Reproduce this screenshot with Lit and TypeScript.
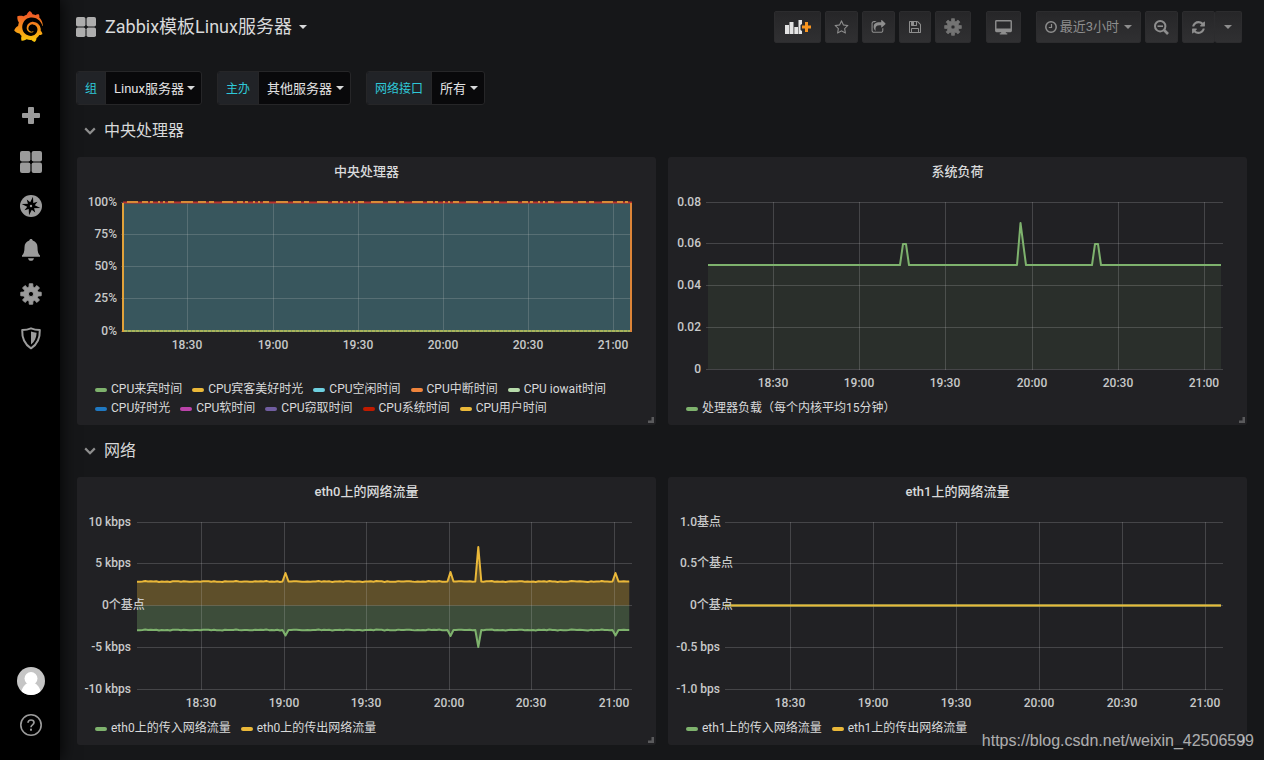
import { LitElement, html, css, svg, nothing } from "lit";
import { customElement, property } from "lit/decorators.js";

type Point = [number, number];

interface Series {
  name: string;
  color: string;
  points?: Point[];
  base?: number;
  fill?: number;
  stroke?: number;
}

interface AxisLabel {
  text: string;
  /** Left edge of the label; labels without one are right-aligned to the plot. */
  x?: number;
}

interface Graph {
  title: string;
  axis: number;
  labelGap: number;
  width: number;
  height: number;
  rows: number[];
  columns: number[];
  labels: AxisLabel[];
  series: Series[];
  frame?: boolean;
}

const TIMES = ["18:30", "19:00", "19:30", "20:00", "20:30", "21:00"];

const GREEN = "#7eb26d";
const YELLOW = "#eab839";

/** A level line with small ripples and the given spikes, all in plot units. */
function traffic(level: number, end: number, spikes: Point[]): Point[] {
  const out: Point[] = [];
  const step = 2.75;
  for (let i = 0; i * step <= end; i++) {
    const x = i * step;
    const ripple = (Math.sin(i * 1.7) + Math.sin(i * 0.61 + 2) + Math.sin(i * 3.3)) / 5;
    if (!spikes.some(([sx]) => Math.abs(sx - x) < 4)) out.push([x, level + ripple]);
  }
  for (const [sx, sy] of spikes) out.push([sx - 3, level], [sx, sy], [sx + 3, level]);
  return out.sort((a, b) => a[0] - b[0]);
}

const GRAPHS: Record<string, Graph> = {
  cpu: {
    title: "中央处理器",
    axis: 44,
    labelGap: 4,
    width: 511,
    height: 130,
    rows: [0, 32, 64, 96, 129],
    columns: [66, 152, 237, 322, 407, 492],
    labels: [{ text: "100%" }, { text: "75%" }, { text: "50%" }, { text: "25%" }, { text: "0%" }],
    frame: true,
    series: [
      { name: "CPU来宾时间", color: GREEN },
      { name: "CPU宾客美好时光", color: YELLOW },
      { name: "CPU空闲时间", color: "#6ed0e0", points: [[2, 1], [510, 1]], base: 129, fill: 0.3, stroke: 0 },
      { name: "CPU中断时间", color: "#ef843c" },
      { name: "CPU iowait时间", color: "#b7dbab" },
      { name: "CPU好时光", color: "#1f78c1" },
      { name: "CPU软时间", color: "#ba43a9" },
      { name: "CPU窃取时间", color: "#705da0" },
      { name: "CPU系统时间", color: "#bf1b00" },
      { name: "CPU用户时间", color: YELLOW },
    ],
  },
  load: {
    title: "系统负荷",
    axis: 38,
    labelGap: 5,
    width: 517,
    height: 168,
    rows: [0, 41, 83, 125, 167],
    columns: [67, 153, 239, 326, 412, 498],
    labels: [{ text: "0.08" }, { text: "0.06" }, { text: "0.04" }, { text: "0.02" }, { text: "0" }],
    series: [
      {
        name: "处理器负载（每个内核平均15分钟）",
        color: GREEN,
        base: 167,
        fill: 0.1,
        points: [
          [2, 63], [194, 63], [197, 42], [200, 42], [203, 63],
          [311, 63], [314.5, 21], [320, 63],
          [386, 63], [389, 42], [392, 42], [395, 63], [515, 63],
        ],
      },
    ],
  },
  eth0: {
    title: "eth0上的网络流量",
    axis: 60,
    labelGap: 6,
    width: 495,
    height: 168,
    rows: [0, 41, 83, 125, 167],
    columns: [64, 147, 229, 312, 394, 477],
    labels: [
      { text: "10 kbps" },
      { text: "5 kbps" },
      { text: "0个基点", x: 25 },
      { text: "-5 kbps" },
      { text: "-10 kbps" },
    ],
    series: [
      {
        name: "eth0上的传入网络流量",
        color: GREEN,
        base: 83.5,
        fill: 0.3,
        points: traffic(108, 493, [[148.5, 113.5], [313.5, 114], [341.3, 125], [478.5, 113.5]]),
      },
      {
        name: "eth0上的传出网络流量",
        color: YELLOW,
        base: 83.5,
        fill: 0.3,
        points: traffic(59.5, 493, [[148.5, 51], [313.5, 50], [341.3, 25], [478.5, 51]]),
      },
    ],
  },
  eth1: {
    title: "eth1上的网络流量",
    axis: 57,
    labelGap: 5,
    width: 498,
    height: 168,
    rows: [0, 41, 83, 125, 167],
    columns: [65, 148, 231, 314, 397, 480],
    labels: [
      { text: "1.0基点", x: 12 },
      { text: "0.5个基点", x: 12 },
      { text: "0个基点", x: 22 },
      { text: "-0.5 bps" },
      { text: "-1.0 bps" },
    ],
    series: [
      { name: "eth1上的传入网络流量", color: GREEN, points: [[0, 83.5], [496, 83.5]] },
      { name: "eth1上的传出网络流量", color: YELLOW, points: [[0, 83.5], [496, 83.5]] },
    ],
  },
};

function gearPath(c: number, outer: number, inner: number, hole: number): string {
  const parts: string[] = [];
  for (let i = 0; i < 8; i++) {
    const a = (i * Math.PI) / 4;
    const corners: Point[] = [[inner, -0.26], [outer, -0.17], [outer, 0.17], [inner, 0.26]];
    for (const [r, d] of corners) {
      parts.push(`${(c + r * Math.sin(a + d)).toFixed(2)} ${(c - r * Math.cos(a + d)).toFixed(2)}`);
    }
  }
  return `M${parts.join("L")}Z M${c - hole} ${c}a${hole} ${hole} 0 1 0 ${hole * 2} 0a${hole} ${hole} 0 1 0 ${-hole * 2} 0Z`;
}

const fa = (size: number, d: string) =>
  html`<svg width=${size} height=${size} viewBox="0 0 1792 1792" aria-hidden="true"><path fill="currentColor" d=${d} /></svg>`;

const gear = (size: number) =>
  html`<svg width=${size} height=${size} viewBox="0 0 24 24" aria-hidden="true">
    <path fill="currentColor" fill-rule="evenodd" stroke="currentColor" stroke-width="1" stroke-linejoin="round" d=${gearPath(12, 11.3, 8, 2.8)} />
  </svg>`;

const caret = html`<svg width="8" height="4" viewBox="0 0 8 4" aria-hidden="true"><path fill="currentColor" d="M0 0h8L4 4z" /></svg>`;

const apps = (size: number) =>
  html`<svg width=${size} height=${size} viewBox="0 0 22 22" aria-hidden="true">
    <g fill="currentColor">
      <rect width="10.4" height="10.4" rx="2" /><rect x="11.6" width="10.4" height="10.4" rx="2" />
      <rect y="11.6" width="10.4" height="10.4" rx="2" /><rect x="11.6" y="11.6" width="10.4" height="10.4" rx="2" />
    </g>
  </svg>`;

const chevron = html`<svg width="12" height="8" viewBox="0 0 12 8" aria-hidden="true">
  <path d="M1.2 1.4L6 6.2l4.800-4.800" fill="none" stroke="currentColor" stroke-width="2.200" />
</svg>`;

const STAR =
  "M1201 1004l306-297-422-62-189-382-189 382-422 62 306 297-73 421 378-199 377 199zm527-357q0 22-26 48l-363 354 86 500q1 7 1 20 0 50-41 50-19 0-40-12l-449-236-449 236q-22 12-40 12-21 0-31.5-14.500t-10.500-35.500q0-6 2-20l86-500-364-354q-25-27-25-48 0-37 56-46l502-73 225-455q19-41 49-41t49 41l225 455 502 73q56 9 56 46z";
const SHARE =
  "M1472 989v259q0 119-84.5 203.5t-203.5 84.5h-832q-119 0-203.5-84.5t-84.5-203.5v-832q0-119 84.5-203.5t203.5-84.5h255q13 0 22.5 9.5t9.5 22.5q0 27-26 32-77 26-133 60-10 4-16 4h-112q-66 0-113 47t-47 113v832q0 66 47 113t113 47h832q66 0 113-47t47-113v-214q0-19 18-29 28-13 54-37 16-16 35-8 21 9 21 29zm237-496l-384 384q-18 19-45 19-12 0-25-5-39-17-39-59v-192h-160q-323 0-438 131-119 137-74 473 3 23-20 34-8 2-12 2-16 0-26-13-10-14-21-31t-39.5-68.5-49.5-99.5-38.5-114-17.5-122q0-49 3.5-91t14-90 28-88 47-81.5 68.5-74 94.5-61.5 124.5-48.5 159.5-30.5 196.5-11h160v-192q0-42 39-59 13-5 25-5 26 0 45 19l384 384q19 19 19 45t-19 45z";
const SAVE =
  "M512 1536h768v-384h-768v384zm896 0h128v-896q0-14-10-38.5t-20-34.5l-281-281q-10-10-34-20t-39-10v416q0 40-28 68t-68 28h-576q-40 0-68-28t-28-68v-416h-128v1280h128v-416q0-40 28-68t68-28h832q40 0 68 28t28 68v416zm-384-928v-320q0-13-9.5-22.5t-22.5-9.5h-192q-13 0-22.5 9.5t-9.5 22.5v320q0 13 9.5 22.5t22.5 9.5h192q13 0 22.5-9.5t9.5-22.5zm640 32v928q0 40-28 68t-68 28h-1344q-40 0-68-28t-28-68v-1344q0-40 28-68t68-28h928q40 0 88 20t76 48l280 280q28 28 48 76t20 88z";
const REFRESH =
  "M1639 1056q0 5-1 7-64 268-268 434.5t-478 166.5q-146 0-282.5-55t-243.5-157l-129 129q-19 19-45 19t-45-19-19-45v-448q0-26 19-45t45-19h448q26 0 45 19t19 45-19 45l-137 137q71 66 161 102t187 36q134 0 250-65t186-179q11-17 53-117 8-23 30-23h192q13 0 22.5 9.5t9.5 22.5zm25-800v448q0 26-19 45t-45 19h-448q-26 0-45-19t-19-45 19-45l138-138q-148-137-349-137-134 0-250 65t-186 179q-11 17-53 117-8 23-30 23h-199q-13 0-22.5-9.5t-9.5-22.5v-7q65-268 270-434.5t480-166.5q146 0 284 55.5t245 156.5l130-129q19-19 45-19t45 19 19 45z";
const LOGO =
  "M23.02 10.59a8.578 8.578 0 0 0-.862-3.034 8.911 8.911 0 0 0-1.789-2.445c.337-1.342-.413-2.505-.413-2.505-1.292-.08-2.113.4-2.416.62-.052-.02-.102-.044-.154-.064-.22-.089-.446-.172-.677-.247-.231-.073-.47-.14-.711-.197a9.867 9.867 0 0 0-.875-.161C14.557.753 12.94 0 12.94 0c-1.804 1.145-2.147 2.744-2.147 2.744l-.018.093c-.098.029-.2.057-.298.088-.138.042-.275.094-.413.143-.138.055-.275.107-.41.166a8.869 8.869 0 0 0-1.557.87l-.063-.029c-2.497-.955-4.716.195-4.716.195-.203 2.658.996 4.33 1.235 4.636a11.608 11.608 0 0 0-.607 2.635C1.636 12.677.953 15.014.953 15.014c1.926 2.214 4.171 2.351 4.171 2.351.003-.002.006-.002.006-.005.285.509.615.994.986 1.446.156.19.32.371.488.548-.704 2.009.099 3.68.099 3.68 2.144.08 3.553-.937 3.849-1.173a9.784 9.784 0 0 0 3.164.501h.08l.055-.003.107-.002.103-.005.003.002c1.01 1.44 2.788 1.646 2.788 1.646 1.264-1.332 1.337-2.653 1.337-2.94v-.058c0-.02-.003-.039-.003-.06.265-.187.52-.387.758-.6a7.875 7.875 0 0 0 1.415-1.7c1.43.083 2.437-.885 2.437-.885-.236-1.49-1.085-2.216-1.264-2.354l-.018-.013-.016-.013a.217.217 0 0 1-.031-.02c.008-.092.016-.18.02-.27.011-.162.016-.323.016-.48v-.253l-.005-.098-.008-.135a1.891 1.891 0 0 0-.01-.13c-.003-.042-.008-.083-.013-.125l-.016-.124-.018-.122a6.215 6.215 0 0 0-2.032-3.73 6.015 6.015 0 0 0-3.222-1.46 6.292 6.292 0 0 0-.85-.048l-.107.002h-.063l-.044.003-.104.008a4.777 4.777 0 0 0-3.335 1.695c-.332.4-.592.84-.768 1.297a4.594 4.594 0 0 0-.312 1.817l.003.091c.005.055.007.11.013.164a3.615 3.615 0 0 0 .698 1.82 3.53 3.53 0 0 0 1.827 1.282c.33.098.66.14.971.137.039 0 .078 0 .114-.002l.063-.003c.02 0 .041-.003.062-.003.034-.002.065-.007.099-.01.007 0 .018-.003.028-.003l.031-.005.06-.008a1.18 1.18 0 0 0 .112-.02c.036-.008.072-.013.109-.024a2.634 2.634 0 0 0 .914-.415c.028-.02.056-.041.085-.065a.248.248 0 0 0 .039-.35.244.244 0 0 0-.309-.06l-.078.042c-.09.044-.184.083-.283.116a2.476 2.476 0 0 1-.475.096c-.028.003-.054.006-.083.006l-.083.002c-.026 0-.054 0-.08-.002l-.102-.006h-.012l-.024.006c-.016-.003-.031-.003-.044-.006-.031-.002-.06-.007-.091-.01a2.59 2.59 0 0 1-.724-.213 2.557 2.557 0 0 1-.667-.438 2.52 2.52 0 0 1-.805-1.475 2.306 2.306 0 0 1-.029-.444l.006-.122v-.023l.002-.031c.003-.021.003-.04.005-.06a3.163 3.163 0 0 1 1.352-2.29 3.12 3.12 0 0 1 .937-.43 2.946 2.946 0 0 1 .776-.101h.06l.07.002.045.003h.026l.07.005a4.041 4.041 0 0 1 1.635.49 3.94 3.94 0 0 1 1.602 1.662 3.77 3.77 0 0 1 .397 1.414l.005.076.003.075c.002.026.002.05.002.075 0 .024.003.052 0 .07v.065l-.002.073-.008.174a6.195 6.195 0 0 1-.08.639 5.1 5.1 0 0 1-.267.927 5.31 5.31 0 0 1-.624 1.13 5.052 5.052 0 0 1-3.237 2.014 4.82 4.82 0 0 1-.649.066l-.039.003h-.287a6.607 6.607 0 0 1-1.716-.265 6.776 6.776 0 0 1-3.4-2.274 6.75 6.75 0 0 1-.746-1.15 6.616 6.616 0 0 1-.714-2.596l-.005-.083-.002-.02v-.056l-.003-.073v-.096l-.003-.104v-.07l.003-.163c.008-.22.026-.45.054-.678a8.707 8.707 0 0 1 .28-1.355c.128-.444.286-.872.473-1.277a7.04 7.04 0 0 1 1.456-2.1 5.925 5.925 0 0 1 .953-.763c.169-.111.343-.213.524-.306.089-.05.182-.091.273-.135.047-.02.093-.042.138-.062a7.177 7.177 0 0 1 .714-.267l.145-.045c.049-.015.098-.026.148-.041.098-.029.197-.052.296-.076.049-.013.1-.02.15-.033l.15-.032.151-.028.076-.013.075-.01.153-.024c.057-.01.114-.013.171-.023l.169-.021c.036-.003.073-.008.106-.01l.073-.008.036-.003.042-.002c.057-.003.114-.008.171-.01l.086-.006h.023l.037-.003.145-.007a7.999 7.999 0 0 1 1.708.125 7.917 7.917 0 0 1 2.048.68 8.253 8.253 0 0 1 1.672 1.09l.09.077.089.078c.06.052.114.107.171.159.057.052.112.106.166.16.052.055.107.107.159.164a8.671 8.671 0 0 1 1.41 1.978c.012.026.028.052.04.078l.04.078.075.156c.023.051.05.1.07.153l.065.15a8.848 8.848 0 0 1 .45 1.34.19.19 0 0 0 .201.142.186.186 0 0 0 .172-.184c.01-.246.002-.532-.024-.856z";

const icons = {
  logo: html`<svg width="31" height="31" viewBox="0 0 24 24" aria-hidden="true">
    <defs>
      <linearGradient id="flame" x1="0" y1="0" x2="0" y2="1">
        <stop offset="0.1" stop-color="#f05a28" /><stop offset="1" stop-color="#fbca0a" />
      </linearGradient>
    </defs>
    <path fill="url(#flame)" d=${LOGO} />
  </svg>`,
  plus: html`<svg width="24" height="24" viewBox="0 0 24 24" aria-hidden="true">
    <path fill="currentColor" d="M10 1h4a1 1 0 0 1 1 1v5h5a1 1 0 0 1 1 1v3a1 1 0 0 1-1 1h-5v5a1 1 0 0 1-1 1h-4a1 1 0 0 1-1-1v-5h-5a1 1 0 0 1-1-1v-3a1 1 0 0 1 1-1h5v-5a1 1 0 0 1 1-1z" />
  </svg>`,
  compass: html`<svg width="22" height="22" viewBox="0 0 22 22" aria-hidden="true">
    <circle cx="11" cy="11" r="11" fill="currentColor" />
    <g transform="rotate(12 11 11)" fill="#000">
      <path d="M11 1.500l2 7.500 7.500 2-7.500 2-2 7.500-2-7.500-7.500-2 7.500-2z" />
      <path d="M5.500 5.500l4 2 3 0 4-2-2 4 0 3 2 4-4-2-3 0-4 2 2-4 0-3z" />
    </g>
    <circle cx="11" cy="11" r="1.200" fill="currentColor" />
  </svg>`,
  bell: html`<svg width="22" height="24" viewBox="0 0 22 24" aria-hidden="true">
    <path fill="currentColor" d="M11 1c1 0 1.600.7 1.700 1.600 3 .8 4.800 3.400 4.800 6.600 0 4.500.8 6.800 2.500 8.300v1.300H2v-1.300c1.700-1.500 2.500-3.800 2.500-8.300 0-3.200 1.800-5.800 4.800-6.600C9.400 1.700 10 1 11 1zM8 20.200h6c-.3 1.600-1.500 2.600-3 2.600s-2.700-1-3-2.600z" />
  </svg>`,
  shield: html`<svg width="22" height="24" viewBox="0 0 22 24" aria-hidden="true">
    <path d="M11 2.300c2.700 1.200 5.600 1.700 8.800 1.700.3 8.200-2.500 14.400-8.800 18.300C4.700 18.400 1.900 12.200 2.200 4c3.200 0 6.100-.5 8.800-1.700z" fill="none" stroke="currentColor" stroke-width="2" stroke-linejoin="round" />
    <path d="M11 5.500c1.800.7 3.600 1.100 5.600 1.300-.1 5-2 9-5.600 11.800z" fill="currentColor" />
  </svg>`,
  avatar: html`<svg width="28" height="28" viewBox="0 0 28 28" aria-hidden="true">
    <defs><clipPath id="disc"><circle cx="14" cy="14" r="14" /></clipPath></defs>
    <g clip-path="url(#disc)">
      <rect width="28" height="28" fill="#c5c5c5" />
      <circle cx="14" cy="11.500" r="6.500" fill="#fff" />
      <path fill="#fff" d="M4 28c0-7 4-11 7-12h6c3 1 7 5 7 12z" />
    </g>
  </svg>`,
  help: html`<svg width="24" height="24" viewBox="0 0 24 24" aria-hidden="true">
    <g fill="none" stroke="currentColor">
      <circle cx="12" cy="12" r="10.200" stroke-width="1.600" />
      <path d="M9 9.800c0-1.700 1.200-2.800 3-2.800s3 1.100 3 2.600c0 2.300-3 2.200-3 4.600" stroke-width="1.700" />
    </g>
    <rect x="11" y="15.700" width="2" height="2" fill="currentColor" />
  </svg>`,
  addPanel: html`<svg width="27" height="16" viewBox="0 0 27 16" aria-hidden="true">
    <g fill="#e3e3e3">
      <rect x="1" y="6" width="4" height="9" /><rect x="5.500" y="3" width="4" height="12" />
      <rect x="10.300" y="8" width="3.700" height="7" /><path d="M14.500 1H18v4l-1.500 1v5l1.500 1v3h-3.500z" />
    </g>
    <path fill="#f79520" d="M21 3h3v3.500h3v3h-3V13h-3V9.500h-3v-3h3z" />
  </svg>`,
  monitor: html`<svg width="17" height="15" viewBox="0 0 18 16" aria-hidden="true">
    <path fill="currentColor" fill-rule="evenodd" d="M1.500 0h15A1.500 1.500 0 0 1 18 1.500v10a1.500 1.500 0 0 1-1.500 1.500H11.500v1h1.500v1.500H5V14h1.500v-1h-5A1.500 1.500 0 0 1 0 11.500v-10A1.500 1.500 0 0 1 1.500 0zM1.500 1.500v7.500h15V1.500z" />
  </svg>`,
  clock: html`<svg width="12" height="12" viewBox="0 0 12 12" aria-hidden="true">
    <g fill="none" stroke="currentColor" stroke-width="1.500"><circle cx="6" cy="6" r="5.200" /><path d="M6.500 3v3.500H3.800" stroke-width="1.200" /></g>
  </svg>`,
  zoomOut: html`<svg width="15" height="15" viewBox="0 0 15 15" aria-hidden="true">
    <g fill="none" stroke="currentColor" stroke-width="2"><circle cx="6.200" cy="6.200" r="5.200" /><path d="M10 10l4 4" stroke-width="2.600" /><path d="M3.500 6.200H9" stroke-width="1.600" /></g>
  </svg>`,
  grip: html`<svg width="6" height="6" viewBox="0 0 6 6" aria-hidden="true"><path d="M3.500 0H6v6H0V3.500h3.500z" fill="#5a5a5c" /></svg>`,
};

const SANS = css`Roboto, "Noto Sans CJK SC", sans-serif`;

@customElement("graph-panel")
export class GraphPanel extends LitElement {
  @property({ attribute: false }) graph!: Graph;

  static styles = css`
    :host {
      display: block;
      min-width: 0;
    }
    .panel {
      position: relative;
      box-sizing: border-box;
      height: 100%;
      min-height: 268px;
      display: flex;
      flex-direction: column;
      background: #212124;
      border-radius: 3px;
      padding-bottom: 7px;
    }
    .title {
      margin: 0;
      font: 500 13px/30px ${SANS};
      text-align: center;
      color: #d8d9da;
    }
    .chart {
      display: flex;
      padding-right: 24px;
    }
    .axis {
      flex: none;
      position: relative;
      z-index: 1;
      overflow: visible;
    }
    .plot {
      flex: 1;
      min-width: 0;
      overflow: visible;
    }
    text {
      font: 500 12px ${SANS};
      fill: #c8c9ca;
    }
    .end {
      text-anchor: end;
    }
    .middle {
      text-anchor: middle;
    }
    .grid {
      stroke: rgba(200, 200, 200, 0.22);
      shape-rendering: crispEdges;
    }
    .legend {
      list-style: none;
      margin: auto 0 0;
      padding: 0 18px;
      display: flex;
      flex-wrap: wrap;
      column-gap: 10px;
      font: 12px/19px ${SANS};
      color: #d8d9da;
    }
    .entry {
      display: flex;
      align-items: center;
      gap: 4px;
      white-space: nowrap;
    }
    .swatch {
      width: 12px;
      height: 4px;
      border-radius: 2px;
    }
    .grip {
      position: absolute;
      right: 2px;
      bottom: 2px;
      display: flex;
    }
  `;

  private drawArea(s: Series) {
    if (!s.points || !s.fill) return nothing;
    const line = s.points.map(([x, y]) => `${x.toFixed(2)} ${y.toFixed(2)}`).join("L");
    const first = s.points[0][0];
    const last = s.points[s.points.length - 1][0];
    return svg`<path d="M${first} ${s.base}L${line}L${last} ${s.base}Z" fill=${s.color} fill-opacity=${s.fill} />`;
  }

  private drawLine(s: Series) {
    if (!s.points) return nothing;
    const line = s.points.map(([x, y]) => `${x.toFixed(2)} ${y.toFixed(2)}`).join("L");
    return svg`<path d="M${line}" fill="none" stroke=${s.color} stroke-width=${s.stroke ?? 2} stroke-linejoin="round" />`;
  }

  /** Stacked CPU series run along the border of the plot. */
  private drawFrame(w: number, h: number) {
    return svg`
      <path d="M2 129H${w}" stroke="#a9b35c" stroke-width="2" />
      <path d="M2 129H${w}" stroke="#7fa05f" stroke-width="2" stroke-dasharray="1 3" />
      <path d="M2 0.500H${w}" stroke="#b9322c" stroke-width="2" />
      <path d="M6 0H${w}" stroke="#d98a36" stroke-width="2" stroke-dasharray="11 4 6 2 3 5 2 3 2 3 6 7 12 5 8 3 5 8" />
      <path d="M2 1V${h}" stroke="#e2a23a" stroke-width="2" />
      <path d="M${w - 1} 1V${h}" stroke="#dd8538" stroke-width="2" />`;
  }

  render() {
    const g = this.graph;
    const top = 15;
    const total = g.height + top + 22;
    return html`<section class="panel">
      <h3 class="title">${g.title}</h3>
      <div class="chart">
        <svg class="axis" width=${g.axis} height=${total}>
          ${g.labels.map((l, i) => {
            const y = top + g.rows[i] + 4;
            return l.x === undefined
              ? svg`<text class="end" x=${g.axis - g.labelGap} y=${y}>${l.text}</text>`
              : svg`<text x=${l.x} y=${y}>${l.text}</text>`;
          })}
        </svg>
        <svg class="plot" height=${total}>
          <svg y=${top} width="100%" height=${g.height} viewBox="0 0 ${g.width} ${g.height}" preserveAspectRatio="none" overflow="visible">
            ${g.series.map((s) => this.drawArea(s))}
            ${g.rows.map((y) => svg`<line class="grid" x1="0" x2=${g.width} y1=${y + 0.5} y2=${y + 0.5} />`)}
            ${g.columns.map((x) => svg`<line class="grid" x1=${x + 0.5} x2=${x + 0.5} y1="0" y2=${g.height} />`)}
            ${g.series.map((s) => this.drawLine(s))}
            ${g.frame ? this.drawFrame(g.width, g.height) : nothing}
          </svg>
          ${g.columns.map(
            (x, i) => svg`<text class="middle" x="${((x / g.width) * 100).toFixed(2)}%" y=${top + g.height + 17}>${TIMES[i]}</text>`,
          )}
        </svg>
      </div>
      <ul class="legend">
        ${g.series.map(
          (s) => html`<li class="entry"><span class="swatch" style="background:${s.color}"></span>${s.name}</li>`,
        )}
      </ul>
      <span class="grip">${icons.grip}</span>
    </section>`;
  }
}

@customElement("app-root")
export class AppRoot extends LitElement {
  static styles = css`
    :host {
      display: flex;
      min-height: 100vh;
      position: relative;
      background: #161719;
      color: #d8d9da;
      font: 13px/20px ${SANS};
    }
    svg {
      display: block;
      flex: none;
    }
    .side {
      flex: none;
      box-sizing: border-box;
      width: 60px;
      padding: 11px 0 13px 2px;
      display: flex;
      flex-direction: column;
      background: #000;
      box-shadow: 0 0 16px #000;
      color: #9b9b9b;
    }
    .side a {
      height: 44px;
      display: flex;
      align-items: center;
      justify-content: center;
      color: inherit;
    }
    .side .home {
      height: 31px;
      margin-bottom: 54px;
      padding-right: 6px;
    }
    .spacer {
      flex: 1;
    }
    .main {
      flex: 1;
      min-width: 0;
      padding-bottom: 15px;
    }
    .bar {
      height: 54px;
      padding: 0 22px 0 16px;
      display: flex;
      align-items: center;
      gap: 4px;
    }
    .heading {
      flex: 1;
      margin: 0;
      font: 18px/24px ${SANS};
    }
    .heading button {
      display: flex;
      align-items: center;
      padding: 0;
      border: 0;
      background: none;
      font: inherit;
      color: inherit;
      white-space: nowrap;
    }
    .heading .name {
      margin: 0 7px 0 9px;
    }
    .heading .apps {
      color: #adadad;
    }
    .tool {
      box-sizing: border-box;
      height: 32px;
      padding: 0 8px;
      display: flex;
      align-items: center;
      justify-content: center;
      gap: 3px;
      border: 1px solid #2c2c2e;
      border-radius: 2px;
      background: linear-gradient(#262628, #303032);
      color: #8e8e8e;
      font: 13px/20px ${SANS};
      white-space: nowrap;
    }
    .tool.wide {
      padding: 0 9px;
    }
    .tool.dim {
      color: #737373;
    }
    .tool svg:last-child:not(:first-child) {
      margin-left: 2px;
    }
    .group {
      display: flex;
      gap: 4px;
      margin-left: 11px;
    }
    .joined {
      display: flex;
    }
    .joined .tool + .tool {
      border-left: 0;
      padding: 0 9px;
    }
    .filters {
      display: flex;
      flex-wrap: wrap;
      gap: 15px;
      padding: 17px 16px 0;
    }
    .filter {
      display: flex;
      height: 34px;
      box-sizing: border-box;
      border: 1px solid #262628;
      border-radius: 3px;
      overflow: hidden;
      background: #09090b;
    }
    .filter label {
      padding: 0 8px;
      border-right: 1px solid #262628;
      background: #212327;
      color: #2fc8d8;
      font: 12px/34px ${SANS};
    }
    .choice {
      display: flex;
      align-items: center;
      position: relative;
    }
    .choice select {
      appearance: none;
      height: 32px;
      margin: 0;
      border: 0;
      padding: 2px 17px 0 8px;
      background: none;
      color: #e3e3e3;
      font: 13px/20px ${SANS};
    }
    .choice svg {
      position: absolute;
      right: 6px;
      pointer-events: none;
    }
    .row {
      margin: 0;
      height: 52px;
      padding: 0 24px;
      display: flex;
      align-items: center;
      font: 16px/24px ${SANS};
    }
    .row button {
      display: flex;
      align-items: center;
      gap: 8px;
      padding: 0;
      border: 0;
      background: none;
      font: inherit;
      color: inherit;
    }
    .row svg {
      color: #8e8e8e;
    }
    .panels {
      display: grid;
      grid-template-columns: repeat(2, minmax(0, 1fr));
      gap: 12px;
      padding: 0 17px;
    }
    .mark {
      position: absolute;
      right: 10px;
      bottom: 8px;
      font: 16px/22px "Liberation Sans", Arial, sans-serif;
      color: rgba(255, 255, 255, 0.65);
    }
  `;

  private filter(id: string, label: string, value: string) {
    return html`<div class="filter">
      <label for=${id}>${label}</label>
      <span class="choice"><select id=${id}><option>${value}</option></select>${caret}</span>
    </div>`;
  }

  private row(title: string, graphs: Graph[]) {
    return html`<h2 class="row"><button>${chevron}${title}</button></h2>
      <div class="panels">${graphs.map((g) => html`<graph-panel .graph=${g}></graph-panel>`)}</div>`;
  }

  render() {
    return html`
      <nav class="side">
        <a class="home" href="#home" aria-label="Grafana">${icons.logo}</a>
        <a href="#create" aria-label="创建">${icons.plus}</a>
        <a href="#dashboards" aria-label="仪表板">${apps(22)}</a>
        <a href="#explore" aria-label="探索">${icons.compass}</a>
        <a href="#alerting" aria-label="警报">${icons.bell}</a>
        <a href="#configuration" aria-label="配置">${gear(22)}</a>
        <a href="#admin" aria-label="管理">${icons.shield}</a>
        <span class="spacer"></span>
        <a href="#profile" aria-label="用户">${icons.avatar}</a>
        <a href="#help" aria-label="帮助">${icons.help}</a>
      </nav>
      <main class="main">
        <header class="bar">
          <h1 class="heading">
            <button><span class="apps">${apps(20)}</span><span class="name">Zabbix模板Linux服务器</span>${caret}</button>
          </h1>
          <button class="tool wide" aria-label="添加面板">${icons.addPanel}</button>
          <button class="tool" aria-label="收藏">${fa(15, STAR)}</button>
          <button class="tool" aria-label="分享">${fa(15, SHARE)}</button>
          <button class="tool" aria-label="保存">${fa(14, SAVE)}</button>
          <button class="tool dim" aria-label="设置">${gear(18)}</button>
          <div class="group"><button class="tool" aria-label="电视模式">${icons.monitor}</button></div>
          <div class="group">
            <button class="tool">${icons.clock}<span>最近3小时</span>${caret}</button>
            <button class="tool" aria-label="缩小">${icons.zoomOut}</button>
            <div class="joined">
              <button class="tool" aria-label="刷新">${fa(15, REFRESH)}</button>
              <button class="tool" aria-label="刷新间隔">${caret}</button>
            </div>
          </div>
        </header>
        <div class="filters">
          ${this.filter("group", "组", "Linux服务器")}
          ${this.filter("host", "主办", "其他服务器")}
          ${this.filter("iface", "网络接口", "所有")}
        </div>
        ${this.row("中央处理器", [GRAPHS.cpu, GRAPHS.load])}
        ${this.row("网络", [GRAPHS.eth0, GRAPHS.eth1])}
      </main>
      <span class="mark">https://blog.csdn.net/weixin_42506599</span>
    `;
  }
}
